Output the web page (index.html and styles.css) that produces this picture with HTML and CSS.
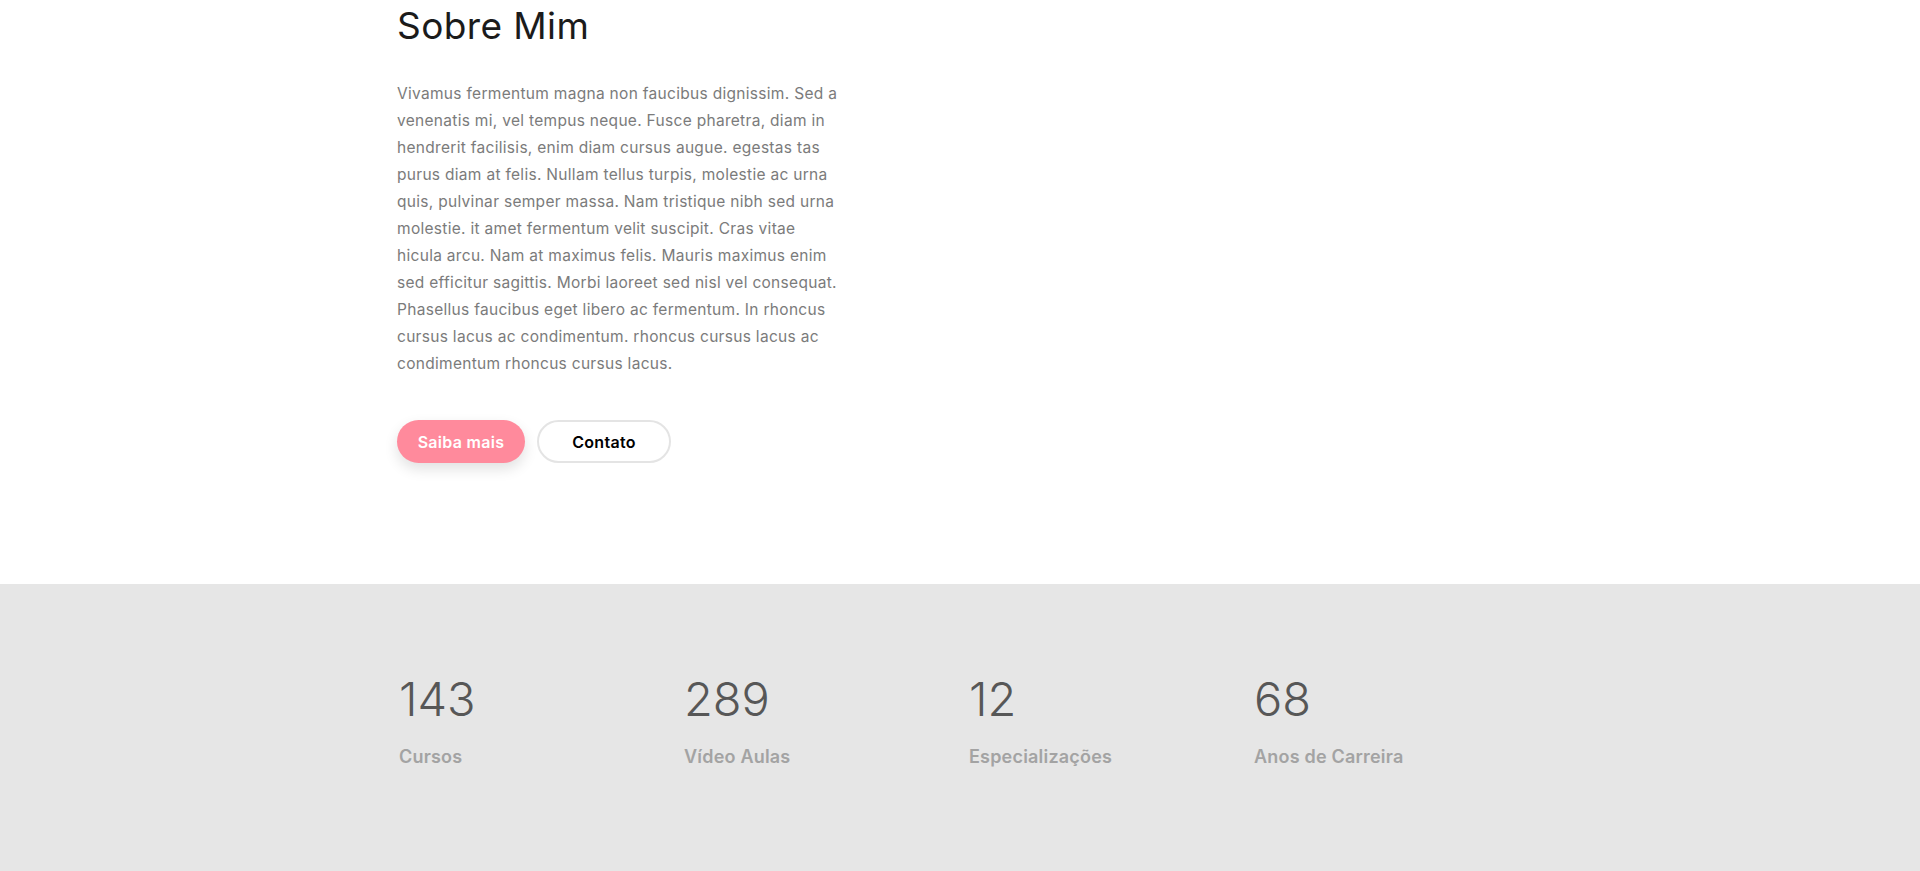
FILE: index.html
```html
<!DOCTYPE html>
<html lang="pt-BR">
<head>
<meta charset="utf-8">
<title>Sobre Mim</title>
<link rel="stylesheet" href="styles.css">
</head>
<body>
<section class="about">
  <div class="container">
    <div class="about-text">
      <h2 class="about-title">Sobre Mim</h2>
      <p class="about-desc">Vivamus fermentum magna non faucibus dignissim. Sed a<br>
        venenatis mi, vel tempus neque. Fusce pharetra, diam in<br>
        hendrerit facilisis, enim diam cursus augue. egestas tas<br>
        purus diam at felis. Nullam tellus turpis, molestie ac urna<br>
        quis, pulvinar semper massa. Nam tristique nibh sed urna<br>
        molestie. it amet fermentum velit suscipit. Cras vitae<br>
        hicula arcu. Nam at maximus felis. Mauris maximus enim<br>
        sed efficitur sagittis. Morbi laoreet sed nisl vel consequat.<br>
        Phasellus faucibus eget libero ac fermentum. In rhoncus<br>
        cursus lacus ac condimentum. rhoncus cursus lacus ac<br>
        condimentum rhoncus cursus lacus.</p>
      <div class="about-actions">
        <a class="btn btn-primary" href="#">Saiba mais</a>
        <a class="btn btn-outline" href="#">Contato</a>
      </div>
    </div>
  </div>
</section>
<section class="stats">
  <div class="container stats-grid">
    <div class="stat">
      <div class="stat-number">143</div>
      <div class="stat-label">Cursos</div>
    </div>
    <div class="stat">
      <div class="stat-number">289</div>
      <div class="stat-label">Vídeo Aulas</div>
    </div>
    <div class="stat">
      <div class="stat-number">12</div>
      <div class="stat-label">Especializações</div>
    </div>
    <div class="stat">
      <div class="stat-number">68</div>
      <div class="stat-label">Anos de Carreira</div>
    </div>
  </div>
</section>
</body>
</html>
```
FILE: styles.css
```css
* { box-sizing: border-box; }
html, body { margin: 0; padding: 0; }
body {
  font-family: "Inter", "Open Sans", sans-serif;
  background: #ffffff;
  color: #1b1b1b;
}
.container {
  width: 1126px;
  margin: 0 auto;
}
.about {
  padding: 4px 0 121px;
}
.about-text {
  width: 480px;
}
.about-title {
  margin: 0;
  font-size: 37px;
  font-weight: 400;
  letter-spacing: 0.4px;
  line-height: 44px;
  color: #1b1b1b;
}
.about-desc {
  margin: 32px 0 0;
  font-size: 15.5px;
  letter-spacing: 0.3px;
  line-height: 27px;
  color: #7b7b7b;
}
.about-actions {
  display: flex;
  gap: 12px;
  margin-top: 43px;
}
.btn {
  display: inline-flex;
  align-items: center;
  justify-content: center;
  height: 43px;
  border-radius: 22px;
  font-size: 16px;
  font-weight: 600;
  letter-spacing: 0.3px;
  text-decoration: none;
}
.btn-primary {
  width: 128px;
  background: #ff8a9c;
  color: #ffffff;
  box-shadow: 0 6px 14px rgba(0, 0, 0, 0.12);
}
.btn-outline {
  width: 134px;
  background: #ffffff;
  color: #000000;
  border: 2px solid #e4e4e4;
}
.stats {
  background: #e6e6e6;
  padding: 85px 0 120px;
  min-height: 320px;
}
.stats-grid {
  display: grid;
  grid-template-columns: repeat(4, 285px);
}
.stat {
  padding-left: 2px;
}
.stat-number {
  font-size: 47px;
  font-weight: 300;
  line-height: 60px;
  color: #575757;
}
.stat-label {
  margin-top: 17px;
  font-size: 18px;
  font-weight: 600;
  letter-spacing: 0.2px;
  color: #a3a3a3;
}
```
